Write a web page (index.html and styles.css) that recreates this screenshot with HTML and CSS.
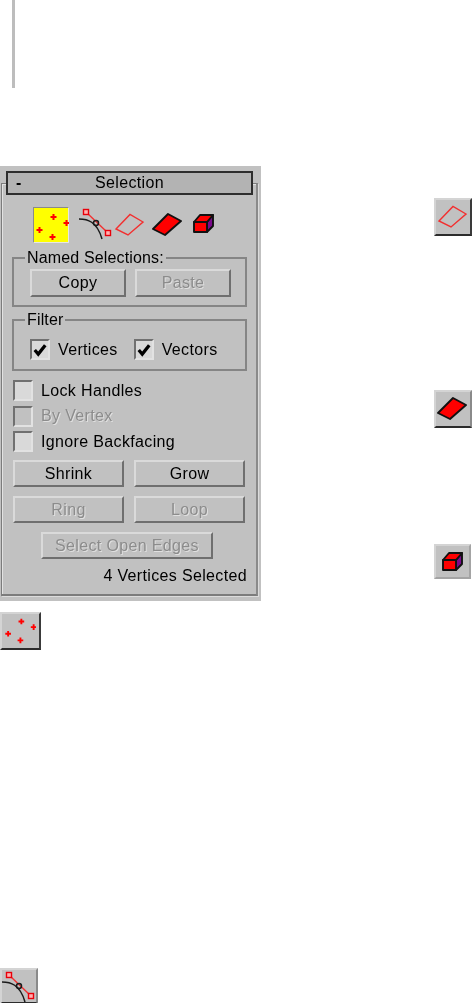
FILE: index.html
```html
<!DOCTYPE html>
<html lang="en">
<head>
<meta charset="utf-8">
<title>Selection</title>
<link rel="stylesheet" href="styles.css">
</head>
<body>
<svg class="defs" width="0" height="0" aria-hidden="true">
  <symbol id="i-vertex" viewBox="0 0 36 36">
    <path class="dot" d="M17.500 9h6M20.500 6v6M30.500 15h6M33.500 12v6M3.500 22h6M6.500 19v6M16.500 29h6M19.500 26v6"/>
  </symbol>
  <symbol id="i-edge" viewBox="0 0 36 34">
    <path class="red-line" d="M8 6 30 27"/>
    <rect class="red-sq" x="5.500" y="3.500" width="5" height="5"/>
    <rect class="red-sq" x="27.500" y="24.500" width="5" height="5"/>
    <path class="black-line" d="M1 13C9 13 19 15 24 33"/>
    <circle class="black-ring" cx="18" cy="17" r="2.500"/>
  </symbol>
  <symbol id="i-border" viewBox="0 0 32 26">
    <path class="red-line" d="M2 17 16 2.500 29 10 14 23Z"/>
  </symbol>
  <symbol id="i-face" viewBox="0 0 32 26">
    <path class="red-fill" d="M1 17 16 2 29 9 13 23Z"/>
  </symbol>
  <symbol id="i-cube" viewBox="0 0 24 22">
    <path class="purple-fill" d="M15 9 21 2V13L15 19Z"/>
    <path class="red-fill" d="M2 9 8 2H21L15 9Z"/>
    <path class="red-fill" d="M2 9H15V19H2Z"/>
  </symbol>
</svg>

<div class="rule"></div>

<main class="doc">
  <div class="col-left">
    <section class="panel">
      <header class="rollout"><span class="minus">-</span><span class="rollout-name">Selection</span></header>
      <div class="frame">
        <div class="modes">
          <span class="mode mode-on"><svg class="ico-vertex"><use href="#i-vertex"/></svg></span>
          <svg class="ico-edge"><use href="#i-edge"/></svg>
          <svg class="ico-border"><use href="#i-border"/></svg>
          <svg class="ico-face"><use href="#i-face"/></svg>
          <svg class="ico-cube"><use href="#i-cube"/></svg>
        </div>

        <fieldset class="group group-named">
          <legend>Named Selections:</legend>
          <div class="row-center">
            <button class="btn btn-named" type="button">Copy</button>
            <button class="btn btn-named off" type="button">Paste</button>
          </div>
        </fieldset>

        <fieldset class="group group-filter">
          <legend>Filter</legend>
          <div class="filter-row">
            <label class="check"><span class="box"><svg class="tick" viewBox="0 0 12 12"><path d="M1.500 6 4.500 9.500 10.500 2"/></svg></span>Vertices</label>
            <label class="check"><span class="box"><svg class="tick" viewBox="0 0 12 12"><path d="M1.500 6 4.500 9.500 10.500 2"/></svg></span>Vectors</label>
          </div>
        </fieldset>

        <div class="options">
          <label class="check"><span class="box"></span>Lock Handles</label>
          <label class="check off"><span class="box"></span>By Vertex</label>
          <label class="check"><span class="box"></span>Ignore Backfacing</label>
        </div>

        <div class="btn-grid">
          <button class="btn" type="button">Shrink</button>
          <button class="btn" type="button">Grow</button>
          <button class="btn off" type="button">Ring</button>
          <button class="btn off" type="button">Loop</button>
        </div>
        <button class="btn btn-open off" type="button">Select Open Edges</button>
        <p class="status">4 Vertices Selected</p>
      </div>
    </section>

    <div class="tool tool-vertex"><svg class="ico-vertex-b"><use href="#i-vertex"/></svg></div>
    <div class="tool tool-edge"><svg class="ico-edge"><use href="#i-edge"/></svg></div>
  </div>

  <div class="col-right">
    <div class="tool"><svg class="ico-border"><use href="#i-border"/></svg></div>
    <div class="tool tool-face"><svg class="ico-face"><use href="#i-face"/></svg></div>
    <div class="tool tool-cube"><svg class="ico-cube"><use href="#i-cube"/></svg></div>
  </div>
</main>
</body>
</html>
```

FILE: styles.css
```css
* { box-sizing: border-box; }

html, body {
  margin: 0;
  height: 1003px;
  overflow: hidden;
  background: #fff;
}

body {
  font-family: "Liberation Sans", Arial, sans-serif;
  font-size: 16px;
  letter-spacing: 0.35px;
  color: #000;
}

.defs { display: block; height: 0; }

.rule {
  width: 3px;
  height: 88px;
  margin-left: 12px;
  background: #bdbdbd;
}

.doc {
  display: flex;
  margin-top: 78px;
}

.col-left { width: 261px; }

.col-right {
  display: flex;
  flex-direction: column;
  margin-left: 173px;
  padding-top: 32px;
}

/* Panel */
.panel {
  height: 435px;
  padding-top: 5px;
  background: #c1c1c1;
  filter: blur(0.45px);
}

.rollout {
  position: relative;
  z-index: 1;
  display: flex;
  align-items: center;
  justify-content: center;
  width: 247px;
  height: 24px;
  margin-left: 6px;
  border: 2px solid #2e2e2e;
  background: #b3b3b3;
}

.minus {
  position: absolute;
  left: 8px;
  top: 0;
  font-weight: bold;
  line-height: 20px;
}

.rollout-name { line-height: 20px; }

.frame {
  display: flex;
  flex-direction: column;
  width: 257px;
  height: 413px;
  margin: -12px 0 0 1px;
  padding: 23px 10px 0 10px;
  border: 1px solid #7c7c7c;
  border-right: 2px solid #8a8a8a;
  border-bottom: 2px solid #7c7c7c;
  box-shadow: inset 1px 1px 0 #e2e2e2, 1px 1px 0 #dcdcdc;
}

/* Mode icons */
.modes {
  display: flex;
  align-items: flex-start;
  height: 37px;
  padding-left: 21px;
}

.mode {
  display: block;
  width: 36px;
  height: 36px;
  background: #ffff00;
  border: 1px solid #8a8a8a;
  border-right-color: #e6e6e6;
  border-bottom-color: #e6e6e6;
}

.mode svg { display: block; }

.ico-vertex { width: 36px; height: 36px; margin: 0 0 0 -1px; }
.ico-vertex-b { width: 36px; height: 36px; margin: 0 3px 3px 0; }
.ico-edge { width: 36px; height: 34px; flex: none; }
.ico-border { width: 32px; height: 26px; flex: none; }
.ico-face { width: 32px; height: 26px; flex: none; }
.ico-cube { width: 24px; height: 22px; flex: none; }

.modes .ico-edge { margin-left: 9px; margin-top: -1px; }
.modes .ico-border { margin-left: 0; margin-top: 5px; }
.modes .ico-face { margin-left: 6px; margin-top: 5px; }
.modes .ico-cube { margin-left: 8px; margin-top: 6px; }

.dot { fill: none; stroke: #ff0000; stroke-width: 2; }
.red-line { fill: none; stroke: #f23030; stroke-width: 1.4; }
.red-sq { fill: #ffb0b0; stroke: #e8000a; stroke-width: 1.4; }
.black-line { fill: none; stroke: #1a1a1a; stroke-width: 1.5; }
.black-ring { fill: none; stroke: #1a1a1a; stroke-width: 1.5; }
.red-fill { fill: #ff0000; stroke: #111; stroke-width: 1.9; stroke-linejoin: round; }
.purple-fill { fill: #7a0a8c; stroke: #111; stroke-width: 1.9; stroke-linejoin: round; }

/* Group boxes */
.group {
  margin: 5px 0 0;
  width: 235px;
  min-width: 0;
  border: 2px solid #858585;
  border-radius: 0;
}

.group legend {
  margin-left: -5px;
  padding: 0 2px;
  line-height: 18px;
  letter-spacing: 0.15px;
}

.group-named { height: 58px; padding: 2px 14px 0 16px; }
.group-filter { height: 60px; margin-top: 4px; padding: 10px 0 0 16px; }

.row-center {
  display: flex;
  gap: 9px;
}

/* Buttons */
.btn {
  display: block;
  width: 111px;
  height: 27px;
  padding: 0;
  border: 2px solid;
  border-color: #dadada #6f6f6f #6f6f6f #dadada;
  background: #c1c1c1;
  font: inherit;
  letter-spacing: inherit;
  color: inherit;
}

.btn-named { width: 96px; height: 28px; }

.off {
  color: #8c8c8c;
  text-shadow: 1px 1px 0 #e0e0e0;
}

.btn-grid {
  display: grid;
  grid-template-columns: 111px 112px;
  column-gap: 10px;
  row-gap: 9px;
  margin: 8px 0 0 1px;
}

.btn-open {
  width: 172px;
  margin: 9px 0 0 29px;
}

.status {
  margin: 7px 0 0;
  width: 235px;
  line-height: 20px;
  text-align: right;
}

/* Checkboxes */
.check {
  display: flex;
  align-items: center;
  gap: 8px;
  height: 21px;
}

.filter-row {
  display: flex;
  gap: 16px;
}

.box {
  display: flex;
  align-items: center;
  justify-content: center;
  width: 20px;
  height: 21px;
  flex: none;
  border: 2px solid;
  border-color: #707070 #e2e2e2 #e2e2e2 #707070;
  background: #d9d9d9;
}

.off .box { background: #c1c1c1; }

.tick {
  width: 14px;
  height: 14px;
  fill: none;
  stroke: #000;
  stroke-width: 2.8;
}

.options {
  display: flex;
  flex-direction: column;
  gap: 4.500px;
  margin: 9px 0 0 1px;
}

/* Stand-alone tool buttons */
.tool {
  display: flex;
  align-items: center;
  justify-content: center;
  flex: none;
  width: 38px;
  height: 38px;
  border: 2px solid;
  border-color: #d4d4d4 #3a3a3a #2c2c2c #d4d4d4;
  background: #c1c1c1;
  filter: blur(0.45px);
}

.tool-vertex { width: 41px; margin-top: 11px; }
.tool-edge { height: 36px; margin-top: 318px; border-right-color: #8a8a8a; }
.tool-face { margin-top: 154px; border-right-color: #8a8a8a; }
.tool-cube { height: 35px; margin-top: 116px; width: 37px; border-color: #d4d4d4 #a4a4a4 #a4a4a4 #d4d4d4; }
```
